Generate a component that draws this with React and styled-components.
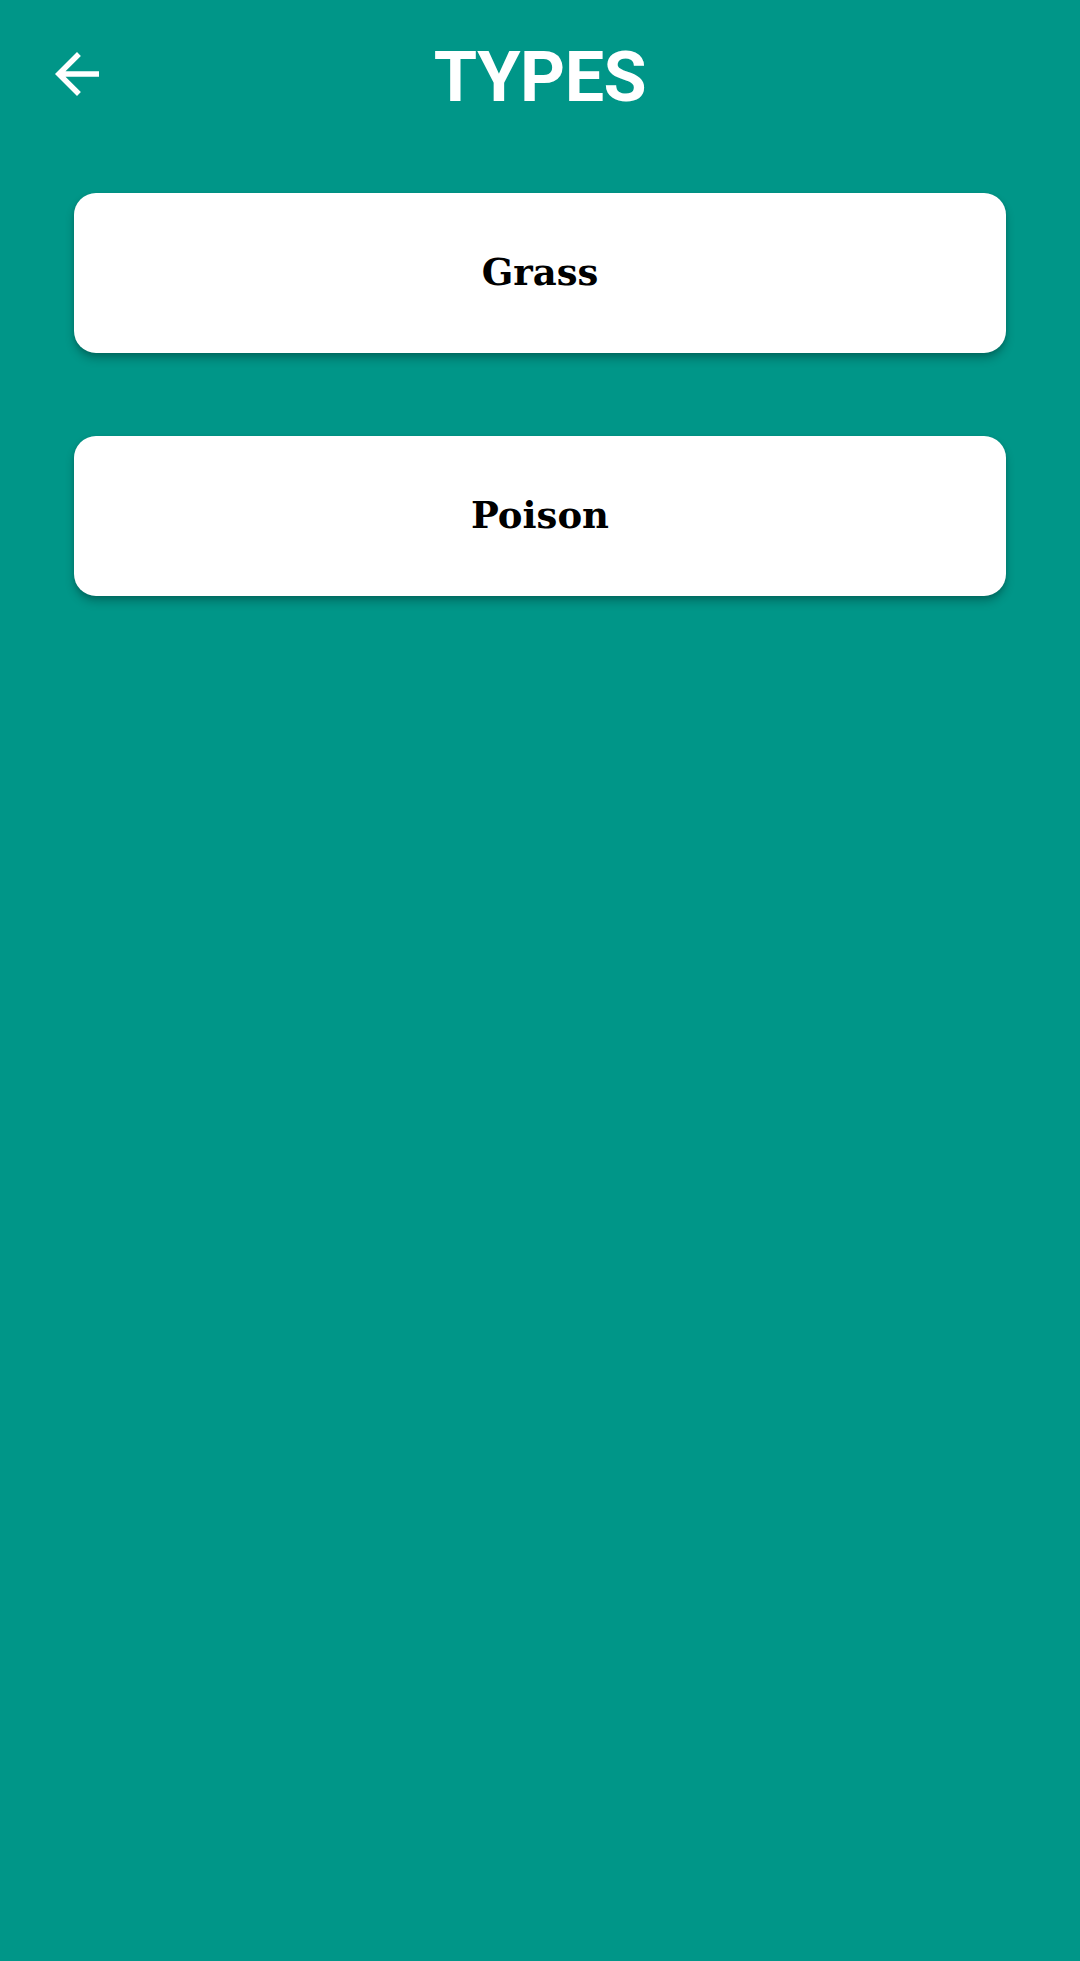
import React from "react";
import styled, { createGlobalStyle } from "styled-components";

const Global = createGlobalStyle`
  html, body { margin: 0; padding: 0; background: #009688; }
  #root { min-height: 1961px; }
`;

const Page = styled.div`
  min-height: 1961px;
  background: #009688;
  display: flex;
  flex-direction: column;
`;

const Header = styled.header`
  position: relative;
  height: 148px;
  box-sizing: border-box;
  padding-top: 6px;
  display: flex;
  align-items: center;
  justify-content: center;
`;

const BackButton = styled.button`
  position: absolute;
  left: 44px;
  top: 41px;
  width: 66px;
  height: 66px;
  padding: 0;
  border: none;
  background: transparent;
  display: flex;
  align-items: center;
  justify-content: center;
  cursor: pointer;
`;

const Title = styled.h1`
  margin: 0;
  font-family: Roboto, "Liberation Sans", sans-serif;
  font-weight: 700;
  font-size: 70px;
  line-height: 1;
  color: #ffffff;
  letter-spacing: -0.5px;
`;

const List = styled.div`
  display: flex;
  flex-direction: column;
  gap: 83px;
  padding: 45px 74px 0;
`;

const Card = styled.div`
  height: 160px;
  background: #ffffff;
  border-radius: 22px;
  box-shadow: 0 6px 10px rgba(0, 0, 0, 0.22), 0 2px 4px rgba(0, 0, 0, 0.12);
  display: flex;
  align-items: center;
  justify-content: center;
`;

const CardLabel = styled.span`
  font-family: "DejaVu Serif", "Liberation Serif", serif;
  font-weight: 700;
  font-size: 37px;
  color: #000000;
  margin-top: -2px;
`;

const ArrowBack = () => (
  <svg width="66" height="66" viewBox="0 0 24 24" fill="#ffffff">
    <path d="M20 11H7.83l5.59-5.59L12 4l-8 8 8 8 1.41-1.41L7.83 13H20v-2z" />
  </svg>
);

export default function App() {
  const types = ["Grass", "Poison"];
  return (
    <>
      <Global />
      <Page>
        <Header>
          <BackButton aria-label="Back">
            <ArrowBack />
          </BackButton>
          <Title>TYPES</Title>
        </Header>
        <List>
          {types.map((t) => (
            <Card key={t}>
              <CardLabel>{t}</CardLabel>
            </Card>
          ))}
        </List>
      </Page>
    </>
  );
}
